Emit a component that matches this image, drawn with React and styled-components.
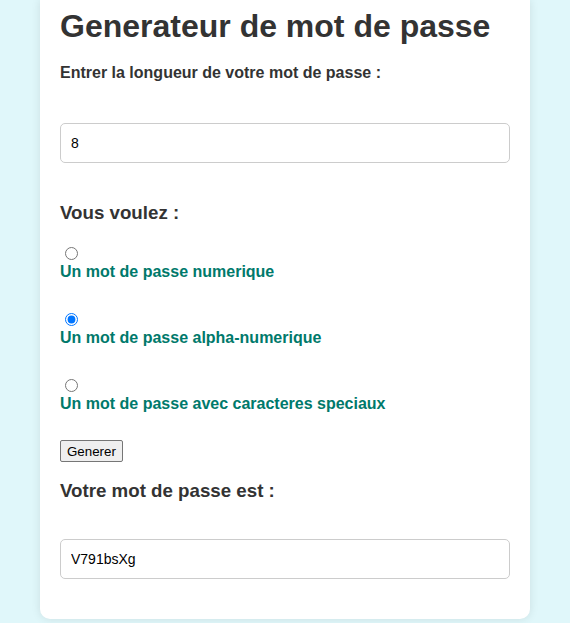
import React from "react";
import styled, { createGlobalStyle } from "styled-components";

const Global = createGlobalStyle`
  html, body {
    margin: 0;
    padding: 0;
    background: #e0f7fa;
    font-family: "Liberation Sans", Arial, sans-serif;
  }
`;

const Page = styled.div`
  padding-bottom: 5px;
`;

const Card = styled.div`
  width: 490px;
  box-sizing: border-box;
  margin: 0 auto;
  background: #ffffff;
  border-radius: 0 0 10px 10px;
  box-shadow: 0 0 10px rgba(0, 0, 0, 0.1);
  padding: 8px 20px 40px;
  color: #333333;
`;

const Title = styled.h1`
  margin: 0;
  font-size: 32px;
  line-height: 37px;
  font-weight: bold;
  color: #333333;
`;

const FieldLabel = styled.label`
  display: block;
  margin-top: 19px;
  font-size: 16px;
  line-height: 18px;
  font-weight: bold;
`;

const TextField = styled.input`
  display: block;
  width: 100%;
  height: 40px;
  box-sizing: border-box;
  margin-top: ${(p) => p.$top}px;
  padding: 0 10px;
  border: 1px solid #cccccc;
  border-radius: 5px;
  font-family: "Liberation Sans", Arial, sans-serif;
  font-size: 14px;
  color: #000000;
  background: #ffffff;
  outline: none;
`;

const Heading = styled.h3`
  margin: ${(p) => p.$top}px 0 0;
  font-size: 18.72px;
  line-height: 21.5px;
  font-weight: bold;
  color: #333333;
`;

const Options = styled.div`
  display: flex;
  flex-direction: column;
  gap: 31.5px;
  margin-top: 23.5px;
`;

const Option = styled.div`
  display: flex;
  flex-direction: column;
  align-items: flex-start;
`;

const Radio = styled.input`
  display: block;
  width: 13px;
  height: 13px;
  margin: 0 0 3px 5px;
`;

const OptionLabel = styled.label`
  display: block;
  font-size: 16px;
  line-height: 18.4px;
  font-weight: bold;
  color: #00796b;
`;

const Button = styled.button`
  display: block;
  margin-top: 27px;
  height: 22px;
  padding: 0 6px;
  font-family: "Liberation Sans", Arial, sans-serif;
  font-size: 13.33px;
  color: #000000;
  background: #efefef;
  border: 1px solid #767676;
  border-radius: 2px;
`;

const options = [
  { id: "num", label: "Un mot de passe numerique", checked: false },
  { id: "alpha", label: "Un mot de passe alpha-numerique", checked: true },
  { id: "spec", label: "Un mot de passe avec caracteres speciaux", checked: false },
];

export default function App() {
  return (
    <Page>
      <Global />
      <Card>
        <Title>Generateur de mot de passe</Title>
        <FieldLabel htmlFor="len">Entrer la longueur de votre mot de passe :</FieldLabel>
        <TextField id="len" type="text" defaultValue="8" $top={41} />
        <Heading $top={39}>Vous voulez :</Heading>
        <Options>
          {options.map((o) => (
            <Option key={o.id}>
              <Radio type="radio" name="kind" id={o.id} defaultChecked={o.checked} />
              <OptionLabel htmlFor={o.id}>{o.label}</OptionLabel>
            </Option>
          ))}
        </Options>
        <Button>Generer</Button>
        <Heading $top={18}>Votre mot de passe est :</Heading>
        <TextField type="text" defaultValue="V791bsXg" readOnly $top={37} />
      </Card>
    </Page>
  );
}
